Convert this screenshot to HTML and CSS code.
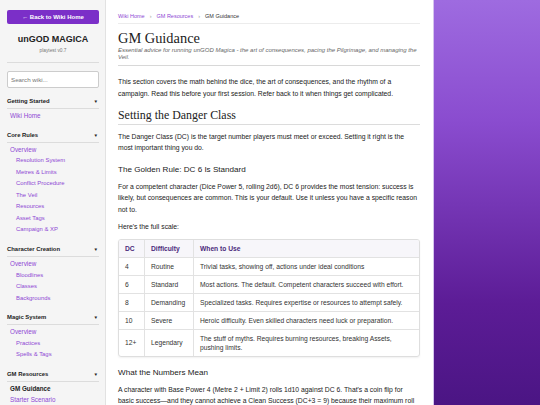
FILE: index.html
```html
<!DOCTYPE html>
<html lang="en">
<head>
    <meta charset="UTF-8">
    <title>GM Guidance - unGOD MAGICA Wiki</title>
    <link rel="stylesheet" href="styles.css">
</head>
<body>
    <div class="layout">
        <aside class="sidebar">
            <a href="#" class="back-btn">← Back to Wiki Home</a>
            <div class="brand">
                <div class="brand-title">unGOD MAGICA</div>
                <div class="brand-ver">playtest v0.7</div>
            </div>
            <input type="text" class="search" placeholder="Search wiki...">

            <div class="nav-section">
                <div class="nav-head"><span>Getting Started</span><span class="arrow">▼</span></div>
                <a href="#" class="nav-link">Wiki Home</a>
            </div>

            <div class="nav-section">
                <div class="nav-head"><span>Core Rules</span><span class="arrow">▼</span></div>
                <a href="#" class="nav-link">Overview</a>
                <a href="#" class="nav-sub">Resolution System</a>
                <a href="#" class="nav-sub">Metres &amp; Limits</a>
                <a href="#" class="nav-sub">Conflict Procedure</a>
                <a href="#" class="nav-sub">The Veil</a>
                <a href="#" class="nav-sub">Resources</a>
                <a href="#" class="nav-sub">Asset Tags</a>
                <a href="#" class="nav-sub">Campaign &amp; XP</a>
            </div>

            <div class="nav-section">
                <div class="nav-head"><span>Character Creation</span><span class="arrow">▼</span></div>
                <a href="#" class="nav-link">Overview</a>
                <a href="#" class="nav-sub">Bloodlines</a>
                <a href="#" class="nav-sub">Classes</a>
                <a href="#" class="nav-sub">Backgrounds</a>
            </div>

            <div class="nav-section">
                <div class="nav-head"><span>Magic System</span><span class="arrow">▼</span></div>
                <a href="#" class="nav-link">Overview</a>
                <a href="#" class="nav-sub">Practices</a>
                <a href="#" class="nav-sub">Spells &amp; Tags</a>
            </div>

            <div class="nav-section">
                <div class="nav-head"><span>GM Resources</span><span class="arrow">▼</span></div>
                <a href="#" class="nav-link active">GM Guidance</a>
                <a href="#" class="nav-link">Starter Scenario</a>
            </div>
        </aside>

        <main class="content">
            <div class="breadcrumb">
                <a href="#">Wiki Home</a>
                <span class="sep">›</span>
                <a href="#">GM Resources</a>
                <span class="sep">›</span>
                <span class="current">GM Guidance</span>
            </div>

            <header class="page-head">
                <h1>GM Guidance</h1>
                <p class="subtitle">Essential advice for running unGOD Magica - the art of consequences, pacing the Pilgrimage, and managing the Veil.</p>
            </header>

            <p class="intro">This section covers the math behind the dice, the art of consequences, and the rhythm of a campaign. Read this before your first session. Refer back to it when things get complicated.</p>

            <h2>Setting the Danger Class</h2>
            <p>The Danger Class (DC) is the target number players must meet or exceed. Setting it right is the most important thing you do.</p>

            <h3>The Golden Rule: DC 6 Is Standard</h3>
            <p>For a competent character (Dice Power 5, rolling 2d6), DC 6 provides the most tension: success is likely, but consequences are common. This is your default. Use it unless you have a specific reason not to.</p>
            <p>Here's the full scale:</p>

            <div class="table-wrap">
                <table>
                    <thead>
                        <tr><th class="col-dc">DC</th><th class="col-diff">Difficulty</th><th>When to Use</th></tr>
                    </thead>
                    <tbody>
                        <tr><td>4</td><td>Routine</td><td>Trivial tasks, showing off, actions under ideal conditions</td></tr>
                        <tr><td>6</td><td>Standard</td><td>Most actions. The default. Competent characters succeed with effort.</td></tr>
                        <tr><td>8</td><td>Demanding</td><td>Specialized tasks. Requires expertise or resources to attempt safely.</td></tr>
                        <tr><td>10</td><td>Severe</td><td>Heroic difficulty. Even skilled characters need luck or preparation.</td></tr>
                        <tr><td>12+</td><td>Legendary</td><td>The stuff of myths. Requires burning resources, breaking Assets, pushing limits.</td></tr>
                    </tbody>
                </table>
            </div>

            <h3 class="after-table">What the Numbers Mean</h3>
            <p>A character with Base Power 4 (Metre 2 + Limit 2) rolls 1d10 against DC 6. That's a coin flip for basic success—and they cannot achieve a Clean Success (DC+3 = 9) because their maximum roll is 10.</p>
        </main>
    </div>
</body>
</html>
```

FILE: styles.css
```css
html, body {
    height: 100%;
}

body {
    margin: 0;
    overflow: hidden;
    font-family: 'Liberation Sans', Arial, sans-serif;
    color: #222;
    background: linear-gradient(180deg, #9e6be0 0%, #8a4ccf 30%, #5c1c96 75%, #4b1584 100%);
}

.layout {
    display: flex;
    height: 100%;
}

/* sidebar */

.sidebar {
    width: 106px;
    flex-shrink: 0;
    box-sizing: border-box;
    padding: 10px 6px 0 7px;
    background: #f5f5f5;
    border-right: 1px solid #e2e2e2;
}

.back-btn {
    display: block;
    height: 14px;
    line-height: 14px;
    background: #7b2fc8;
    color: white;
    font-size: 6px;
    font-weight: bold;
    text-align: center;
    text-decoration: none;
    border-radius: 2px;
}

.brand {
    text-align: center;
    padding: 10px 0 8px;
    border-bottom: 1px solid #dcdcdc;
}

.brand-title {
    font-size: 9px;
    font-weight: bold;
    line-height: 11px;
    color: #222;
}

.brand-ver {
    font-size: 4.8px;
    line-height: 7px;
    margin-top: 2px;
    color: #777;
}

.search {
    display: block;
    width: 100%;
    height: 17px;
    box-sizing: border-box;
    margin-top: 8px;
    padding: 0 3px;
    border: 1px solid #ccc;
    border-radius: 2px;
    background: white;
    font-family: inherit;
    font-size: 6.2px;
}

.search::placeholder {
    color: #777;
}

.nav-section {
    margin-top: 10.2px;
}

.nav-section:first-of-type {
    margin-top: 7px;
}

.nav-head {
    display: flex;
    justify-content: space-between;
    font-size: 5.9px;
    font-weight: bold;
    line-height: 7px;
    padding-bottom: 3px;
    border-bottom: 1px solid #dcdcdc;
    margin-bottom: 1px;
    color: #222;
}

.arrow {
    font-size: 4.6px;
    padding-right: 1px;
}

.nav-link,
.nav-sub {
    display: block;
    line-height: 11.5px;
    color: #8e47d4;
    text-decoration: none;
}

.nav-link {
    font-size: 6.3px;
    padding-left: 3px;
}

.nav-sub {
    font-size: 5.9px;
    padding-left: 9px;
}

.nav-link.active {
    color: #222;
    font-weight: bold;
}

/* main content */

.content {
    width: 328px;
    flex-shrink: 0;
    box-sizing: border-box;
    padding: 0 13px 0 12px;
    background: white;
    border-right: 1px solid #d5c3ee;
}

.breadcrumb {
    font-size: 5.5px;
    line-height: 8px;
    padding: 12px 0 3px;
    border-bottom: 1px solid #ececec;
    color: #333;
}

.breadcrumb a {
    color: #8e47d4;
    text-decoration: none;
}

.breadcrumb .sep {
    color: #999;
    margin: 0 3.5px;
}

.page-head {
    border-bottom: 1px solid #d8d8d8;
    padding-bottom: 4px;
}

h1 {
    font-family: 'Liberation Serif', 'Times New Roman', serif;
    font-weight: normal;
    font-size: 14.4px;
    line-height: 18px;
    margin: 5px 0 0;
    color: #222;
}

.subtitle {
    font-size: 6px;
    font-style: italic;
    line-height: 7px;
    color: #666;
    margin: 0;
}

p {
    font-size: 6.8px;
    line-height: 11.5px;
    margin: 6px 0 0;
    color: #222;
}

.intro {
    margin-top: 10px;
}

h2 {
    font-family: 'Liberation Serif', 'Times New Roman', serif;
    font-weight: normal;
    font-size: 11.9px;
    line-height: 13px;
    margin: 10px 0 0;
    padding-bottom: 1.5px;
    border-bottom: 1px solid #dcdcdc;
}

h3 {
    font-size: 8.1px;
    font-weight: normal;
    line-height: 10px;
    margin: 11px 0 1.5px;
    color: #222;
}

.after-table {
    margin-top: 11px;
    margin-bottom: 0;
}

.table-wrap {
    margin-top: 6px;
    border: 1px solid #dedede;
    border-radius: 3px;
    overflow: hidden;
    box-shadow: 0 1px 2px rgba(0,0,0,0.06);
}

table {
    width: 100%;
    border-collapse: collapse;
    font-size: 6.7px;
    line-height: 9px;
}

th, td {
    text-align: left;
    padding: 4px 6px;
    border-left: 1px solid #e2e2e2;
    vertical-align: middle;
}

th:first-child,
td:first-child {
    border-left: none;
}

th {
    background: #f7f6fa;
    color: #4b2a7b;
    font-weight: bold;
}

td {
    border-top: 1px solid #e2e2e2;
    color: #333;
}

.col-dc {
    width: 13px;
}

.col-diff {
    width: 36px;
}
```
